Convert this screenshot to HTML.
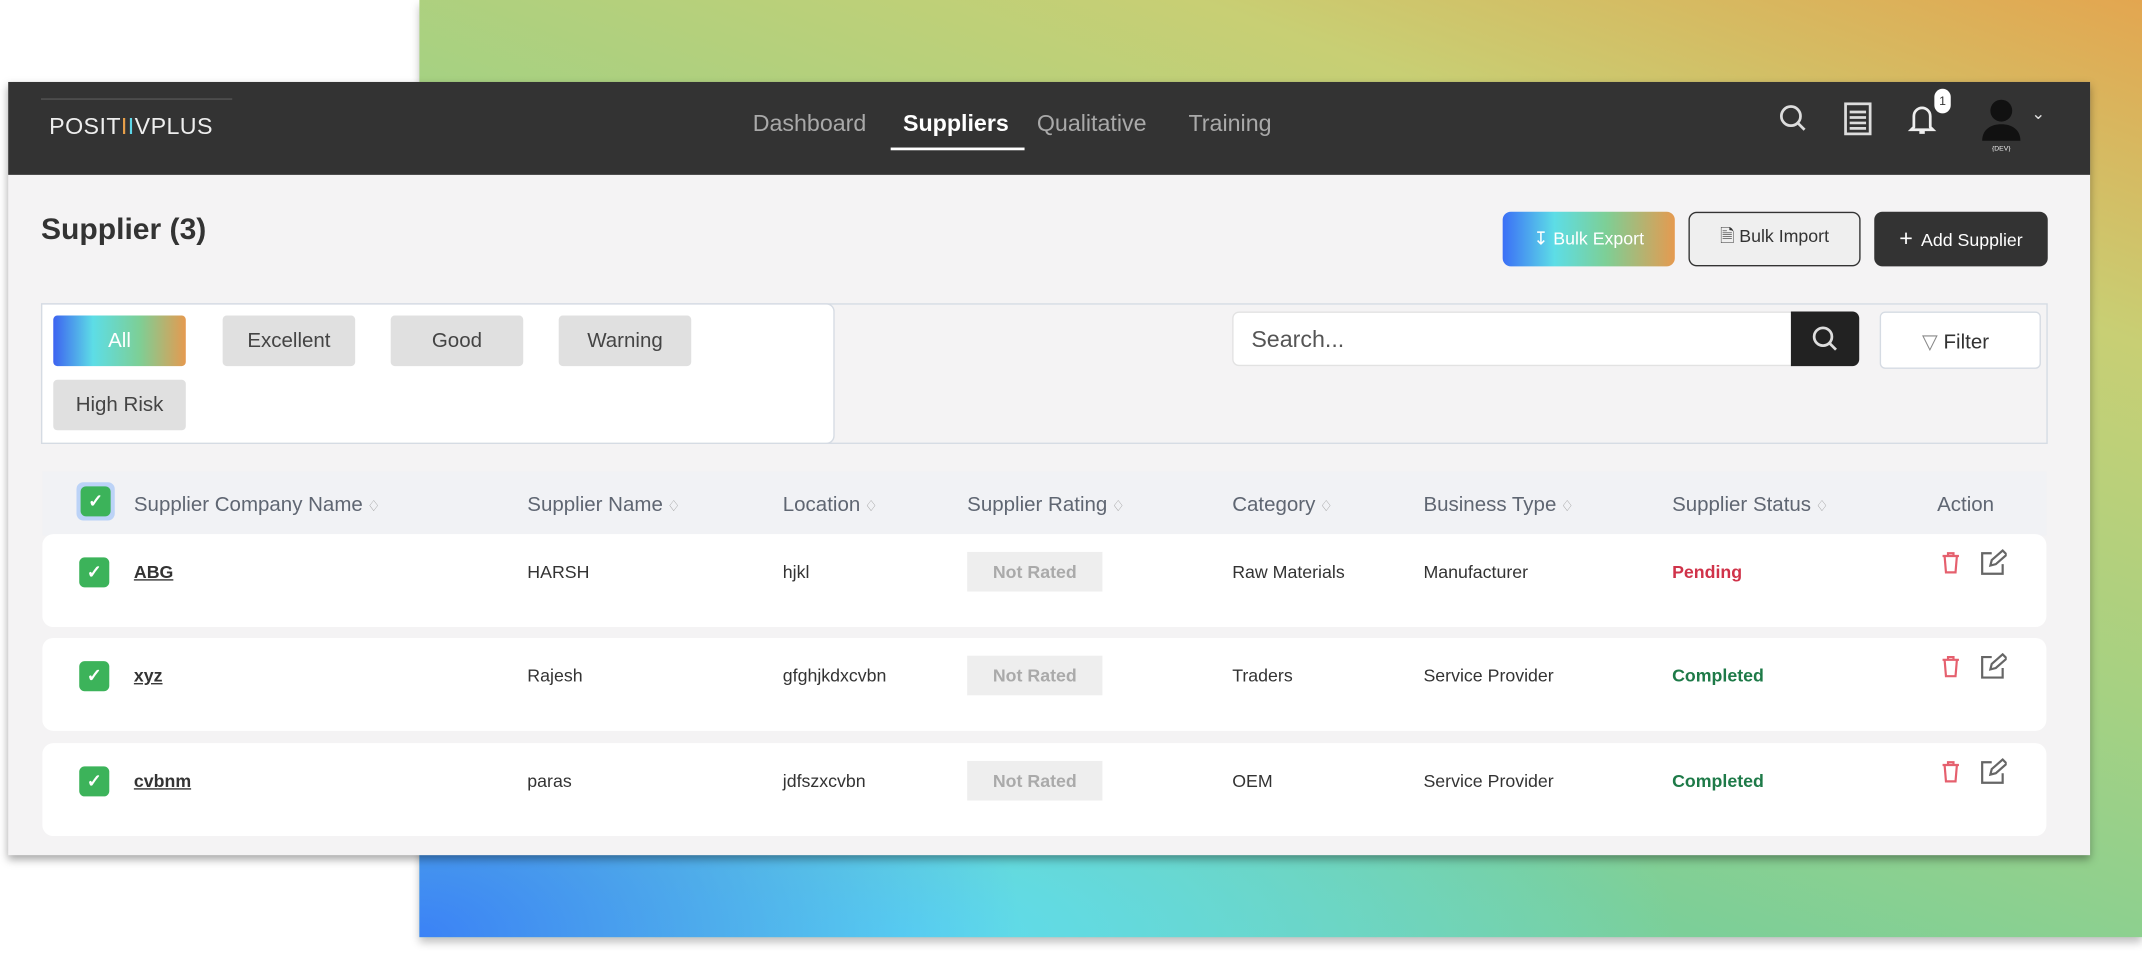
<!DOCTYPE html>
<html><head><meta charset="utf-8"><style>
*{box-sizing:border-box;margin:0;padding:0}
html,body{width:2142px;height:954px;overflow:hidden;background:#fff;font-family:"Liberation Sans",sans-serif}
#w{position:absolute;left:0;top:0;width:1568px;height:699px;transform:scale(1.36607);transform-origin:0 0}
.bg{position:absolute;left:307px;top:0;width:1261px;height:686px;box-shadow:0 4px 6px rgba(0,0,0,.25);
background:radial-gradient(ellipse 35% 40% at 0% 100%,#3b82f6 0%,rgba(59,130,246,0) 100%),
radial-gradient(ellipse 45% 35% at 28% 100%,#5ddcf0 0%,rgba(93,220,240,0) 100%),
linear-gradient(200deg,#e3a650 0%,#c8cf74 22%,#a6d182 45%,#7ccf98 70%,#6cd6c4 100%)}
.card{position:absolute;left:6px;top:60px;width:1524px;height:566px;background:#f4f3f4;box-shadow:0 3px 6px rgba(0,0,0,.35)}
.hd{position:absolute;left:0;top:0;width:1524px;height:68px;background:#333}
.abs{position:absolute}
.nav{position:absolute;top:21px;font-size:17px;color:#a9a9a9}
.btn{position:absolute;top:95px;height:40px;border-radius:6px;font-size:13px;display:flex;align-items:center;justify-content:center;gap:6px}
.chip{position:absolute;width:97px;height:37px;background:#e0e0e0;border-radius:3px;font-size:15px;color:#444;display:flex;align-items:center;justify-content:center}
.th{position:absolute;top:301px;font-size:15px;color:#5f6672}
.th:after{content:" \2662";font-size:11px;color:#999}
.row{position:absolute;left:25px;width:1467px;height:68px;background:#fff;border-radius:8px}
.cb{position:absolute;left:27px;top:17px;width:22px;height:22px;background:#3cb35a;border-radius:4px;color:#fff;font-size:13px;text-align:center;line-height:22px;font-weight:bold}
.c{position:absolute;top:20px;font-size:13px;color:#333}
.nr{position:absolute;left:677px;top:13px;width:99px;height:29px;background:#eee;color:#aaa;font-size:13px;font-weight:bold;text-align:center;line-height:29px}
</style></head><body><div id="w">
<div class="bg"></div>
<div class="card">
 <div class="hd">
  <div class="abs" style="left:24px;top:12px;width:140px;height:1px;background:#555"></div>
  <div class="abs" style="left:30px;top:23px;color:#eee;font-size:17px;letter-spacing:.3px">POSIT<span style="color:#e8a04a">I</span><span style="color:#5dd6e8">I</span>VPLUS</div>
  <div class="nav" style="left:545px">Dashboard</div>
  <div class="nav" style="left:655px;color:#fff;font-weight:bold">Suppliers</div>
  <div class="abs" style="left:646px;top:48px;width:98px;height:2px;background:#fff"></div>
  <div class="nav" style="left:753px">Qualitative</div>
  <div class="nav" style="left:864px">Training</div>
  <svg class="abs" style="left:1296px;top:16px" width="22" height="22" viewBox="0 0 22 22" fill="none" stroke="#ddd" stroke-width="2"><circle cx="9" cy="9" r="7"/><path d="M14 14l5 5"/></svg>
  <svg class="abs" style="left:1343px;top:14px" width="22" height="26" viewBox="0 0 22 26" fill="none" stroke="#ddd" stroke-width="2"><rect x="2" y="2" width="18" height="22"/><path d="M5 8h12M5 12h12M5 16h12M5 20h12"/></svg>
  <svg class="abs" style="left:1390px;top:14px" width="24" height="26" viewBox="0 0 24 26" fill="none" stroke="#eee" stroke-width="2"><path d="M5 19V11a6 6 0 0 1 12 0v8l2 2H3z M9 23h4"/></svg>
  <div class="abs" style="left:1410px;top:5px;width:12px;height:18px;background:#fff;border-radius:6px;color:#333;font-size:9px;text-align:center;line-height:18px">1</div>
  <svg class="abs" style="left:1442px;top:9px" width="34" height="42" viewBox="0 0 34 42"><circle cx="17" cy="12" r="8" fill="#111"/><path d="M3 34c0-8 6-12 14-12s14 4 14 12z" fill="#111"/><text x="17" y="41" font-size="5" text-anchor="middle" fill="#eee">{DEV}</text></svg>
  <div class="abs" style="left:1481px;top:16px;color:#ddd;font-size:12px">&#8964;</div>
 </div>
 <div class="abs" style="left:24px;top:95px;font-size:22px;font-weight:bold;color:#333">Supplier (3)</div>
 <div class="btn" style="left:1094px;width:126px;background:linear-gradient(90deg,#3b6ff6,#5ddde6 30%,#7dcf96 60%,#e59a50);color:#fff">&#8615; Bulk Export</div>
 <div class="btn" style="left:1230px;width:126px;background:#efefef;border:1.5px solid #333;color:#333">&#128462; Bulk Import</div>
 <div class="btn" style="left:1366px;width:127px;background:#333;color:#fff"><span style="font-size:17px">+</span> Add Supplier</div>
 <div class="abs" style="left:24px;top:162px;width:1469px;height:103px;border:1px solid #d5dbe3"></div>
 <div class="abs" style="left:24px;top:162px;width:581px;height:103px;border:1px solid #d5dbe3;background:#fff;border-radius:0 6px 6px 0"></div>
 <div class="chip" style="left:33px;top:171px;background:linear-gradient(90deg,#3d63f0,#5ddde6 30%,#7dcf96 65%,#e59a50);color:#fff">All</div>
 <div class="chip" style="left:157px;top:171px">Excellent</div>
 <div class="chip" style="left:280px;top:171px">Good</div>
 <div class="chip" style="left:403px;top:171px">Warning</div>
 <div class="chip" style="left:33px;top:218px">High Risk</div>
 <div class="abs" style="left:896px;top:168px;width:410px;height:40px;background:#fff;border:1px solid #e2e2e2;border-radius:5px 0 0 5px;font-size:17px;color:#555;padding:10px 0 0 13px">Search...</div>
 <div class="abs" style="left:1305px;top:168px;width:50px;height:40px;background:#222;border-radius:0 5px 5px 0"><svg style="margin:10px 0 0 15px" width="20" height="20" viewBox="0 0 20 20" fill="none" stroke="#ddd" stroke-width="2"><circle cx="8.5" cy="8.5" r="6.5"/><path d="M13 13l5 5"/></svg></div>
 <div class="abs" style="left:1370px;top:168px;width:118px;height:42px;background:#fff;border:1px solid #d5dbe3;border-radius:4px;font-size:15px;color:#333;padding:12px 0 0 30px"><span style="color:#888">&#9661;</span> Filter</div>
 <div class="abs" style="left:25px;top:285px;width:1467px;height:47px;background:#f1f2f5"></div>
 <div class="abs" style="left:50px;top:293px;width:28px;height:28px;background:#bcd3f7;border-radius:5px"></div>
 <div class="abs" style="left:53px;top:296px;width:22px;height:22px;background:#3cb35a;border-radius:4px;color:#fff;font-size:13px;text-align:center;line-height:22px;font-weight:bold">&#10003;</div>
 <div class="th" style="left:92px">Supplier Company Name</div>
 <div class="th" style="left:380px">Supplier Name</div>
 <div class="th" style="left:567px">Location</div>
 <div class="th" style="left:702px">Supplier Rating</div>
 <div class="th" style="left:896px">Category</div>
 <div class="th" style="left:1036px">Business Type</div>
 <div class="th" style="left:1218px">Supplier Status</div>
 <div class="abs" style="left:1412px;top:301px;font-size:15px;color:#5f6672">Action</div>

 <div class="row" style="top:331px">
  <div class="cb">&#10003;</div><div class="c" style="left:67px;font-weight:bold;text-decoration:underline">ABG</div>
  <div class="c" style="left:355px">HARSH</div><div class="c" style="left:542px">hjkl</div><div class="nr">Not Rated</div>
  <div class="c" style="left:871px">Raw Materials</div><div class="c" style="left:1011px">Manufacturer</div>
  <div class="c" style="left:1193px;color:#d0334a;font-weight:bold">Pending</div>
  <svg class="abs" style="left:1389px;top:12px" width="16" height="18" viewBox="0 0 16 18" fill="none" stroke="#e5606e" stroke-width="1.6"><path d="M2 4h12M6 4V2h4v2M3.5 4l1 12h7l1-12"/></svg>
  <svg class="abs" style="left:1418px;top:11px" width="20" height="20" viewBox="0 0 20 20" fill="none" stroke="#666" stroke-width="1.6"><path d="M9 3H2v15h15v-7M8 12l1-4 8-7 3 3-8 7z"/></svg>
 </div>
 <div class="row" style="top:407px">
  <div class="cb">&#10003;</div><div class="c" style="left:67px;font-weight:bold;text-decoration:underline">xyz</div>
  <div class="c" style="left:355px">Rajesh</div><div class="c" style="left:542px">gfghjkdxcvbn</div><div class="nr">Not Rated</div>
  <div class="c" style="left:871px">Traders</div><div class="c" style="left:1011px">Service Provider</div>
  <div class="c" style="left:1193px;color:#1e7a48;font-weight:bold">Completed</div>
  <svg class="abs" style="left:1389px;top:12px" width="16" height="18" viewBox="0 0 16 18" fill="none" stroke="#e5606e" stroke-width="1.6"><path d="M2 4h12M6 4V2h4v2M3.5 4l1 12h7l1-12"/></svg>
  <svg class="abs" style="left:1418px;top:11px" width="20" height="20" viewBox="0 0 20 20" fill="none" stroke="#666" stroke-width="1.6"><path d="M9 3H2v15h15v-7M8 12l1-4 8-7 3 3-8 7z"/></svg>
 </div>
 <div class="row" style="top:484px">
  <div class="cb">&#10003;</div><div class="c" style="left:67px;font-weight:bold;text-decoration:underline">cvbnm</div>
  <div class="c" style="left:355px">paras</div><div class="c" style="left:542px">jdfszxcvbn</div><div class="nr">Not Rated</div>
  <div class="c" style="left:871px">OEM</div><div class="c" style="left:1011px">Service Provider</div>
  <div class="c" style="left:1193px;color:#1e7a48;font-weight:bold">Completed</div>
  <svg class="abs" style="left:1389px;top:12px" width="16" height="18" viewBox="0 0 16 18" fill="none" stroke="#e5606e" stroke-width="1.6"><path d="M2 4h12M6 4V2h4v2M3.5 4l1 12h7l1-12"/></svg>
  <svg class="abs" style="left:1418px;top:11px" width="20" height="20" viewBox="0 0 20 20" fill="none" stroke="#666" stroke-width="1.6"><path d="M9 3H2v15h15v-7M8 12l1-4 8-7 3 3-8 7z"/></svg>
 </div>
</div>
</div></body></html>
